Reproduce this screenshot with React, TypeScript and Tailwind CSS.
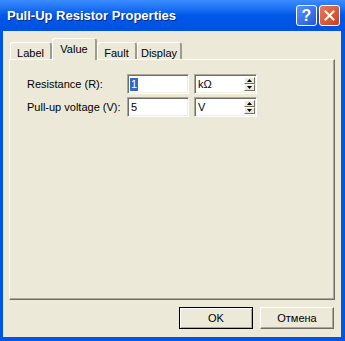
import React from 'react';

const sunken =
  'border border-t-[#ACA899] border-l-[#ACA899] border-r-white border-b-white shadow-[inset_1px_1px_0_#716F64,inset_-1px_-1px_0_#F1EFE2] bg-white';

const Spinner: React.FC = () => (
  <div className="flex flex-col w-[11px] h-full">
    <div className="flex-1 flex items-center justify-center bg-[#ECE9D8] border border-t-white border-l-white border-r-[#716F64] border-b-[#716F64]">
      <svg width="5" height="3" viewBox="0 0 5 3">
        <path d="M2.5 0 L5 3 L0 3 Z" fill="#000" />
      </svg>
    </div>
    <div className="flex-1 flex items-center justify-center bg-[#ECE9D8] border border-t-white border-l-white border-r-[#716F64] border-b-[#716F64]">
      <svg width="5" height="3" viewBox="0 0 5 3">
        <path d="M0 0 L5 0 L2.5 3 Z" fill="#000" />
      </svg>
    </div>
  </div>
);

const Row: React.FC<{ label: string; value: string; unit: string; selected?: boolean }> = ({ label, value, unit, selected }) => (
  <div className="flex items-center h-[20px]">
    <div className="w-[100px]">{label}</div>
    <div className={`${sunken} w-[62px] h-[20px] flex items-center pl-[2px]`}>
      {selected ? <span className="bg-[#316AC5] text-white px-[1px] leading-[13px]">{value}</span> : <span className="px-[1px]">{value}</span>}
    </div>
    <div className={`${sunken} ml-[5px] w-[63px] h-[20px] flex items-stretch p-[2px] pr-[1px]`}>
      <div className="flex-1 flex items-center pl-[1px]">{unit}</div>
      <Spinner />
    </div>
  </div>
);

const tabs = ['Label', 'Value', 'Fault', 'Display'];
const tabWidths = ['w-[42px]', 'w-[45px]', 'w-[40px]', 'w-[45px]'];

const App: React.FC = () => {
  return (
    <div className="w-[345px] h-[341px] bg-[#0055E5] flex flex-col text-[11px] text-black" style={{ fontFamily: '"Liberation Sans", Arial, sans-serif' }}>
      <div className="h-[31px] flex items-center pl-[7px] pr-[5px] bg-gradient-to-b from-[#3A8CFF] via-[#0058E8] to-[#0052E0]">
        <div className="flex-1 text-white font-bold text-[13px] [text-shadow:1px_1px_0_#0A2A8A]">Pull-Up Resistor Properties</div>
        <div className="flex gap-[2px]">
          <div className="w-[21px] h-[21px] rounded-[3px] border border-white bg-gradient-to-br from-[#5A94FA] to-[#2456D8] flex items-center justify-center text-white font-bold text-[16px] leading-none">?</div>
          <div className="w-[21px] h-[21px] rounded-[3px] border border-white bg-gradient-to-br from-[#E97A55] to-[#C8401C] flex items-center justify-center">
            <svg width="11" height="11" viewBox="0 0 11 11">
              <path d="M1.5 1.5 L9.5 9.5 M9.5 1.5 L1.5 9.5" stroke="#fff" strokeWidth="2" strokeLinecap="square" />
            </svg>
          </div>
        </div>
      </div>
      <div className="flex-1 ml-[3px] mr-[4px] mb-[4px] bg-[#ECE9D8] flex flex-col px-[6px] pt-[7px] pb-[8px]">
        <div className="flex items-end h-[21px] pl-[1px] relative z-10">
          {tabs.map((t, i) => {
            const sel = t === 'Value';
            return (
              <div
                key={t}
                className={`${tabWidths[i]} ${sel ? 'h-[22px] -mb-px pt-[2px]' : 'h-[17px] pt-[2px]'} bg-[#ECE9D8] border-l border-t border-r-2 border-l-white border-t-white border-r-[#9D9A8E] rounded-t-[3px] flex justify-center`}
              >
                {t}
              </div>
            );
          })}
        </div>
        <div className="flex-1 border border-t-white border-l-white border-r-[#716F64] border-b-[#716F64] shadow-[inset_-1px_-1px_0_#ACA899] flex flex-col gap-[3px] pl-[17px] pt-[14px]">
          <Row label="Resistance (R):" value="1" unit="kΩ" selected />
          <Row label="Pull-up voltage (V):" value="5" unit="V" />
        </div>
        <div className="flex justify-end gap-[7px] mt-[7px] pr-px">
          <div className="w-[74px] h-[22px] border border-black bg-[#ECE9D8] shadow-[inset_1px_1px_0_#fff,inset_-1px_-1px_0_#ACA899] flex items-center justify-center">OK</div>
          <div className="w-[74px] h-[22px] border border-t-white border-l-white border-r-[#716F64] border-b-[#716F64] bg-[#ECE9D8] shadow-[inset_-1px_-1px_0_#ACA899] flex items-center justify-center">Отмена</div>
        </div>
      </div>
    </div>
  );
};

export default App;
